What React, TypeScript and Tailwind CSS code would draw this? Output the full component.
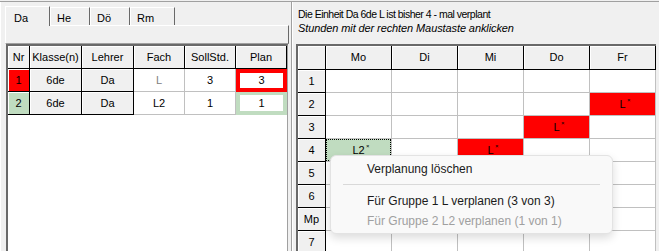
const font = "font-['Liberation_Sans',Arial,sans-serif]";

const tabs = ["Da", "He", "Dö", "Rm"];

function Mark({ text }: { text: string }) {
  return (
    <span className="relative">
      {text}
      <span className="absolute -right-[5px] top-[1px] text-[6px] leading-none">×</span>
    </span>
  );
}

function FixedCell({ w, children, bg = "bg-[#f0f0f0]" }: { w: string; children?: React.ReactNode; bg?: string }) {
  return (
    <div
      className={`${w} ${bg} h-full shrink-0 flex items-center justify-center border-r border-b border-black shadow-[inset_1px_1px_0_#fff]`}
    >
      {children}
    </div>
  );
}

function Cell({ w, children, className = "" }: { w: string; children?: React.ReactNode; className?: string }) {
  return (
    <div className={`${w} h-full shrink-0 flex items-center justify-center border-r border-b border-[#c0c0c0] ${className}`}>
      {children}
    </div>
  );
}

function LeftPanel() {
  return (
    <div className="w-[289px] h-full shrink-0 flex flex-col border-l border-white">
      <div className="mt-[3px] h-[20px] pl-[4px] flex items-end">
        {tabs.map((t, i) =>
          i === 0 ? (
            <div
              key={t}
              className="w-[45px] h-[20px] pl-[8px] pt-[3px] border-l border-t border-white border-r border-r-[#696969] bg-[#f0f0f0] relative z-10 -mb-px"
            >
              {t}
            </div>
          ) : (
            <div
              key={t}
              className={`${i === 3 ? "w-[45px]" : "w-[40px]"} h-[18px] pl-[6px] pt-[2px] border-l border-t border-white border-r border-r-[#696969] bg-[#f0f0f0]`}
            >
              {t}
            </div>
          )
        )}
      </div>
      <div className="ml-[4px] w-[284px] h-[19px] border-t border-l border-white border-r border-r-[#696969] border-b border-b-[#a0a0a0]" />
      <div className="ml-[5px] w-[282px] flex-1 bg-white border-l-2 border-t-2 border-l-[#696969] border-t-[#696969] border-r border-r-[#a0a0a0] overflow-hidden">
        <div className="h-[23px] flex">
          <FixedCell w="w-[22px]">Nr</FixedCell>
          <FixedCell w="w-[52px]">Klasse(n)</FixedCell>
          <FixedCell w="w-[52px]">Lehrer</FixedCell>
          <FixedCell w="w-[51px]">Fach</FixedCell>
          <FixedCell w="w-[51px]">SollStd.</FixedCell>
          <FixedCell w="w-[51px]">Plan</FixedCell>
        </div>
        <div className="h-[23px] flex">
          <FixedCell w="w-[22px]" bg="bg-[#ff0000]">1</FixedCell>
          <FixedCell w="w-[52px]">6de</FixedCell>
          <FixedCell w="w-[52px]">Da</FixedCell>
          <Cell w="w-[51px]" className="text-[#808080]">L</Cell>
          <Cell w="w-[51px]">3</Cell>
          <div className="w-[51px] h-full shrink-0 bg-[#ff0000] px-[4px] pt-[4px] pb-[4px]">
            <div className="h-full bg-white flex items-center justify-center">3</div>
          </div>
        </div>
        <div className="h-[23px] flex">
          <FixedCell w="w-[22px]" bg="bg-[#c0dcc0]">2</FixedCell>
          <FixedCell w="w-[52px]">6de</FixedCell>
          <FixedCell w="w-[52px]">Da</FixedCell>
          <Cell w="w-[51px]">L2</Cell>
          <Cell w="w-[51px]">1</Cell>
          <div className="w-[51px] h-full shrink-0 bg-[#c0dcc0] px-[4px] pt-[3px] pb-[4px]">
            <div className="h-full bg-white flex items-center justify-center">1</div>
          </div>
        </div>
      </div>
    </div>
  );
}

const days = ["Mo", "Di", "Mi", "Do", "Fr"];
const hours = ["1", "2", "3", "4", "5", "6", "Mp", "7"];

function slot(hour: string, day: string) {
  if ((hour === "2" && day === "Fr") || (hour === "3" && day === "Do") || (hour === "4" && day === "Mi")) {
    return (
      <Cell w="w-[66px]" className="bg-[#ff0000] border-r-[#c0c0c0]">
        <Mark text="L" />
      </Cell>
    );
  }
  if (hour === "4" && day === "Mo") {
    return (
      <Cell w="w-[66px]" className="bg-[#c0dcc0]">
        <div className="w-full h-full flex items-center justify-center border border-dotted border-black">
          <Mark text="L2" />
        </div>
      </Cell>
    );
  }
  return <Cell w="w-[66px]" />;
}

function RightPanel() {
  return (
    <div className="flex-1 h-full flex flex-col">
      <div className="h-[42px] pl-[3px] pt-[5px] leading-[14px]">
        <div className="text-[10.5px] tracking-[-0.5px]">Die Einheit Da 6de L ist bisher 4 - mal verplant</div>
        <div className="italic text-[11px] tracking-[-0.1px]">Stunden mit der rechten Maustaste anklicken</div>
      </div>
      <div className="ml-px w-[360px] flex-1 bg-white border-l-2 border-t-2 border-l-[#696969] border-t-[#696969] overflow-hidden">
        <div className="h-[24px] flex">
          <FixedCell w="w-[28px]" />
          {days.map((d) => (
            <FixedCell key={d} w="w-[66px]">
              {d}
            </FixedCell>
          ))}
        </div>
        {hours.map((h) => (
          <div key={h} className="h-[23px] flex">
            <FixedCell w="w-[28px]">{h}</FixedCell>
            {days.map((d) => (
              <div key={d} className="contents">
                {slot(h, d)}
              </div>
            ))}
          </div>
        ))}
      </div>
    </div>
  );
}

function ContextMenu() {
  return (
    <div className="absolute left-[330px] top-[155px] w-[283px] h-[79px] bg-[#f9f9f9] border border-[#e3e3e3] rounded-[6px] shadow-[0_4px_10px_rgba(0,0,0,0.14)] pt-[3px] text-[12px] text-[#1a1a1a]">
      <div className="h-[20px] pl-[36px] flex items-center">Verplanung löschen</div>
      <div className="mx-[12px] mt-[5px] mb-[6px] h-px bg-[#d9d9d9]" />
      <div className="h-[20px] pl-[36px] flex items-center">Für Gruppe 1 L verplanen (3 von 3)</div>
      <div className="h-[20px] pl-[36px] flex items-center text-[#a0a0a0]">Für Gruppe 2 L2 verplanen (1 von 1)</div>
    </div>
  );
}

export default function App() {
  return (
    <div className={`${font} relative w-[659px] h-[251px] overflow-hidden bg-[#f0f0f0] pt-px text-[11px] text-black`}>
      <div className="h-full flex border-t border-[#a0a0a0]">
        <LeftPanel />
        <div className="w-[6px] h-full shrink-0 flex">
          <div className="ml-[2px] w-px h-full bg-[#a0a0a0]" />
          <div className="w-px h-full bg-white" />
        </div>
        <RightPanel />
      </div>
      <ContextMenu />
    </div>
  );
}
